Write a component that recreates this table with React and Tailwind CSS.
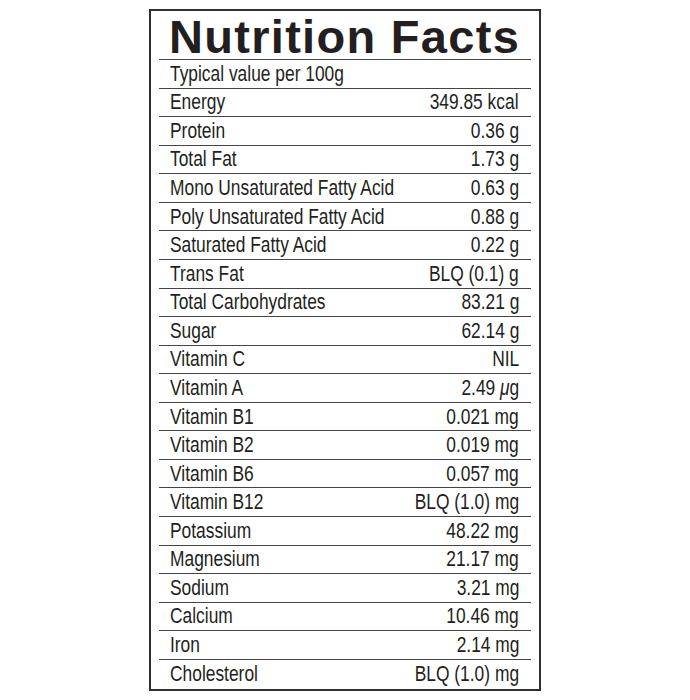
import React from 'react';

const rows = [
  ['Typical value per 100g', ''],
  ['Energy', '349.85 kcal'],
  ['Protein', '0.36 g'],
  ['Total Fat', '1.73 g'],
  ['Mono Unsaturated Fatty Acid', '0.63 g'],
  ['Poly Unsaturated Fatty Acid', '0.88 g'],
  ['Saturated Fatty Acid', '0.22 g'],
  ['Trans Fat', 'BLQ (0.1) g'],
  ['Total Carbohydrates', '83.21 g'],
  ['Sugar', '62.14 g'],
  ['Vitamin C', 'NIL'],
  ['Vitamin A', 'mu'],
  ['Vitamin B1', '0.021 mg'],
  ['Vitamin B2', '0.019 mg'],
  ['Vitamin B6', '0.057 mg'],
  ['Vitamin B12', 'BLQ (1.0) mg'],
  ['Potassium', '48.22 mg'],
  ['Magnesium', '21.17 mg'],
  ['Sodium', '3.21 mg'],
  ['Calcium', '10.46 mg'],
  ['Iron', '2.14 mg'],
  ['Cholesterol', 'BLQ (1.0) mg'],
];

const App = () => {
  return (
    <div className="w-[690px] h-[700px] bg-white pt-[9px] font-['Liberation_Sans',Arial,sans-serif] text-[#231f20]">
      <div className="ml-[149px] w-[392px] h-[682px] border-2 border-[#2e2e2e] px-[8px] flex flex-col">
        {/* Title */}
        <div className="h-[48px] pt-[4px] pl-[10px] text-[47px] leading-[44px] font-bold tracking-[1.3px] whitespace-nowrap">
          Nutrition Facts
        </div>

        {rows.map(([label, value], i) => (
          <div
            key={label}
            className={`border-t border-[#444] flex justify-between items-center pl-[11px] pr-[12px] text-[22px] leading-[26px] whitespace-nowrap ${
              i === rows.length - 1 ? 'flex-1' : 'h-[28.57px]'
            }`}
          >
            <span className="inline-block origin-left scale-x-[0.79]">{label}</span>
            <span className="inline-block origin-right scale-x-[0.79]">
              {value === 'mu' ? (
                <>
                  2.49 <i>μ</i>g
                </>
              ) : (
                value
              )}
            </span>
          </div>
        ))}
      </div>
    </div>
  );
};

export default App;
